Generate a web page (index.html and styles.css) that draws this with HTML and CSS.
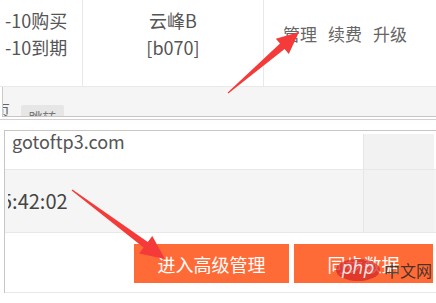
FILE: index.html
```html
<!doctype html>
<html lang="zh-CN">
  <head>
    <meta charset="UTF-8" />
    <meta name="viewport" content="width=device-width, initial-scale=1.0" />
    <title>管理</title>
    <link rel="stylesheet" href="styles.css">
  </head>
  <body>
    <main class="page">
      <section class="shot-top">
        <div class="host-row">
          <div class="cell dates">
            <div>-10购买</div>
            <div>-10到期</div>
          </div>
          <div class="cell host-name">
            <div>云峰B</div>
            <div>[b070]</div>
          </div>
          <div class="cell actions">
            <a href="#">管理</a>
            <a href="#">续费</a>
            <a href="#">升级</a>
          </div>
        </div>
        <div class="pager">
          <span class="pager-cut">页</span>
          <button class="jump-button">跳转</button>
        </div>
      </section>

      <div class="divider"></div>

      <section class="shot-bottom">
        <div class="detail-row first">
          <div class="detail-cell domain">gotoftp3.com</div>
          <div class="side-cell"></div>
        </div>
        <div class="detail-row second">
          <div class="detail-cell time">
            <div class="time-clip"><span>5:42:02</span></div>
          </div>
          <div class="side-cell"></div>
        </div>
        <div class="button-row">
          <button class="action-button advanced">进入高级管理</button>
          <button class="action-button sync">同步数据</button>
        </div>
      </section>
    </main>

    <div class="watermark">
      <span class="wm-logo">php</span>
      <span class="wm-text">中文网</span>
    </div>

    <svg class="arrows" width="436" height="303" viewBox="0 0 436 303">
      <polygon points="227.7,92.6 280,43.6 275.8,38.7 299,32 288.8,53.9 284.6,49 228.3,93.4" />
      <polygon points="71.6,190.5 143.6,247.5 139.1,253.5 165,259 152.3,235.9 147.8,241.9 72.4,189.5" />
    </svg>
  </body>
</html>
```

FILE: styles.css
```css
* {
  margin: 0;
  padding: 0;
  box-sizing: border-box;
}

html,
body {
  width: 436px;
  height: 303px;
  overflow: hidden;
  background: #fff;
}

body {
  position: relative;
  font-family: "Noto Sans CJK SC", "Noto Sans", sans-serif;
  color: #555;
}

/* first screenshot: host list */
.shot-top {
  height: 117px;
}

.host-row {
  display: grid;
  grid-template-columns: 83px 181px 1fr;
  height: 87px;
  border-bottom: 1px solid #e8e8e8;
}

.cell {
  font-size: 18px;
  line-height: 27px;
  padding-top: 7px;
}

.dates {
  padding-left: 5px;
  border-right: 1px solid #e8e8e8;
}

.host-name {
  text-align: center;
  border-right: 1px solid #e8e8e8;
}

.actions {
  padding-left: 19px;
  padding-top: 20px;
  font-size: 17px;
  display: flex;
  gap: 11px;
}

.actions a {
  color: #666;
  text-decoration: none;
}

.pager {
  height: 30px;
  margin-left: 2px;
  background: #f5f5f5;
  border-left: 1px solid #cfc8c8;
  border-bottom: 1px solid #cbc4c4;
  display: flex;
  align-items: flex-start;
  overflow: hidden;
}

.pager-cut {
  margin-left: -8px;
  margin-top: 14px;
  font-size: 15px;
  line-height: 18px;
  color: #666;
}

.jump-button {
  margin-left: 11px;
  margin-top: 18px;
  width: 43px;
  height: 24px;
  border: none;
  border-radius: 2px;
  background: #e6e6e6;
  color: #777;
  font-family: inherit;
  font-size: 14px;
}

.divider {
  height: 3px;
  border-bottom: 1px solid #d6d0d0;
}

/* second screenshot: site detail */
.shot-bottom {
  margin-top: 10px;
  margin-left: 4px;
  border-top: 1px solid #cbc4c4;
  border-left: 1px solid #cbc4c4;
}

.detail-row {
  display: grid;
  grid-template-columns: 1fr 71px;
  padding-right: 2px;
  border-bottom: 1px solid #e8e8e8;
}

.detail-row.first {
  height: 39px;
}

.detail-row.second {
  height: 63px;
  background: #f5f5f5;
}

.side-cell {
  background: #f2f2f2;
  border-left: 1px solid #e6e6e6;
}

.first .side-cell {
  margin-top: 3px;
}

.domain {
  padding-left: 7px;
  font-size: 18px;
  line-height: 20px;
}

.time {
  display: flex;
  align-items: center;
}

.time-clip {
  margin-left: 3px;
  overflow: hidden;
  font-size: 20px;
  line-height: 26px;
  color: #444;
}

.time-clip span {
  display: block;
  margin-left: -7px;
}

.button-row {
  display: flex;
  justify-content: flex-end;
  gap: 5px;
  height: 60px;
  padding: 11px 3px 0 0;
  border-bottom: 1px solid #e8e8e8;
}

.action-button {
  height: 39px;
  border: none;
  background: #ff6b37;
  color: #fff;
  font-family: inherit;
  font-size: 18px;
}

.advanced {
  width: 155px;
}

.sync {
  width: 139px;
}

/* overlays */
.watermark {
  position: absolute;
  left: 336px;
  top: 258px;
  display: flex;
  align-items: center;
  pointer-events: none;
}

.wm-logo {
  width: 44px;
  height: 22px;
  border-radius: 50%;
  background: rgba(214, 40, 40, 0.75);
  color: rgba(255, 255, 255, 0.85);
  font-family: "DejaVu Sans", sans-serif;
  font-style: italic;
  font-size: 17px;
  line-height: 18px;
  text-align: center;
}

.wm-text {
  margin-left: 4px;
  font-size: 16px;
  color: rgba(40, 40, 40, 0.85);
}

.arrows {
  position: absolute;
  left: 0;
  top: 0;
  pointer-events: none;
}

.arrows polygon {
  fill: #f53a3a;
}
```
